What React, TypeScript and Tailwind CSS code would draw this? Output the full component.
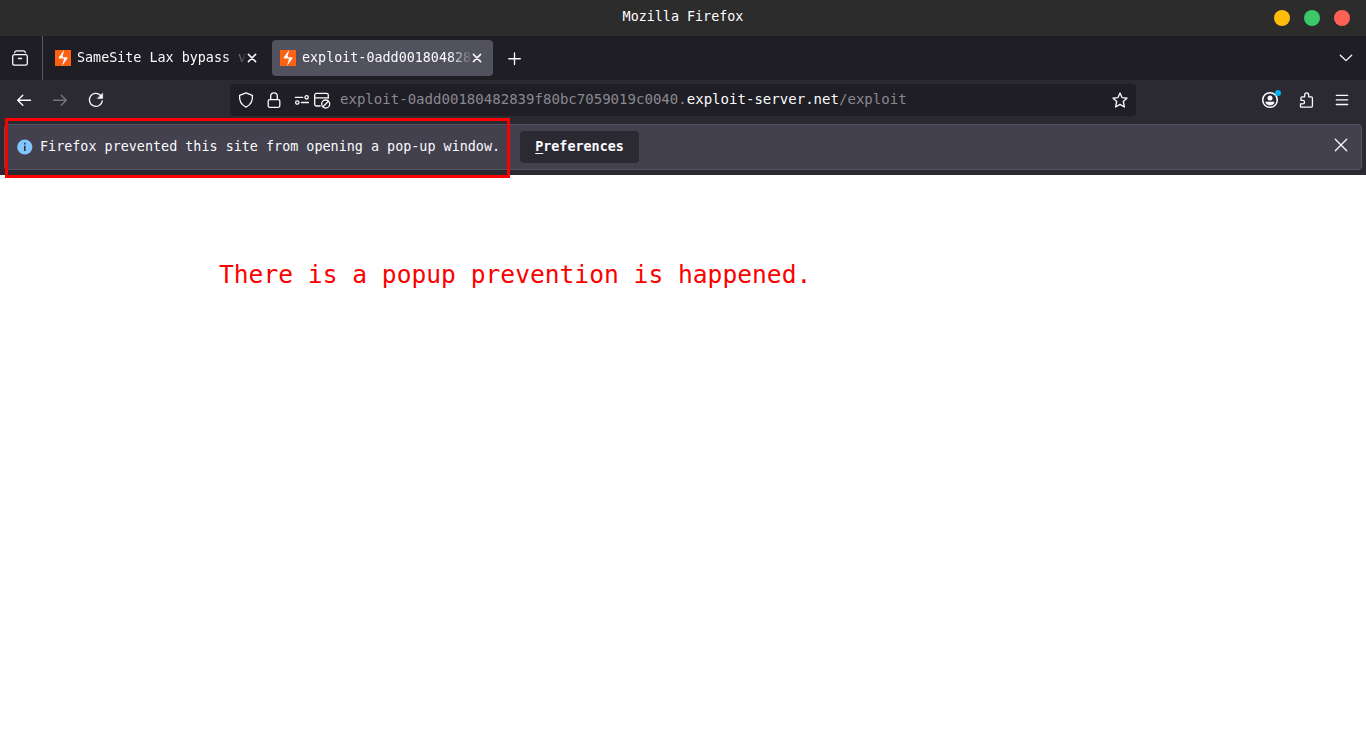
import type { ReactNode } from "react";

type IconProps = { children: ReactNode; className?: string };

function Icon({ children, className = "" }: IconProps) {
  return (
    <svg
      viewBox="0 0 16 16"
      fill="none"
      stroke="currentColor"
      strokeWidth="1.3"
      strokeLinecap="round"
      strokeLinejoin="round"
      className={`size-4 shrink-0 overflow-visible ${className}`}
    >
      {children}
    </svg>
  );
}

function BurpLogo() {
  return (
    <svg viewBox="0 0 16 16" className="size-4 shrink-0">
      <rect width="16" height="16" fill="#ff6113" />
      <path d="M9.2 0 3.8 7.3v1.2h5.2L7 16l5.4-7.4V7.2H7.7z" fill="#fff" />
      <path d="M9.6 1.5v4.6H7.4zM6.5 14.3V9.8h2.2z" fill="#ff6113" />
    </svg>
  );
}

function TabTitle({ children }: { children: ReactNode }) {
  return (
    <div className="ml-1.5 -mr-1 w-[171px] whitespace-nowrap leading-5 [mask-image:linear-gradient(to_right,black_86%,transparent)]">
      {children}
    </div>
  );
}

function TabClose() {
  return (
    <Icon>
      <path d="M4.4 4.4 11.6 11.6M11.6 4.4 4.4 11.6" strokeWidth="1.5" />
    </Icon>
  );
}

function TitleBar() {
  return (
    <header className="flex h-9 bg-[#2c2c2c]">
      <div className="w-[200px]" />
      <h1 className="flex-1 pt-[7px] text-center leading-5 text-white">Mozilla Firefox</h1>
      <div className="flex w-[200px] items-center justify-end gap-3.5 pr-4">
        <span className="size-4 rounded-full bg-[#ffbd0b]" />
        <span className="size-4 rounded-full bg-[#3ac86a]" />
        <span className="size-4 rounded-full bg-[#ff6152]" />
      </div>
    </header>
  );
}

function TabStrip() {
  return (
    <div className="flex h-11 items-center bg-[#1f1e25]">
      <div className="flex h-11 w-[43px] items-center border-r border-[#5a5a60] pl-3">
        <Icon>
          <path d="M2.6 2.6c.3-1.1.9-1.7 2-1.7h6.8c1.1 0 1.7.6 2 1.7" />
          <rect x=".7" y="4.6" width="14.6" height="10.6" rx="1.8" />
          <path d="M6.4 8.5h3.2" />
        </Icon>
      </div>
      <div className="flex w-[221px] items-center pl-3">
        <BurpLogo />
        <TabTitle>SameSite Lax bypass v</TabTitle>
        <TabClose />
      </div>
      <div className="ml-2 flex h-9 w-[221px] items-center rounded bg-[#52525e] pl-2">
        <BurpLogo />
        <TabTitle>exploit-0add001804828</TabTitle>
        <TabClose />
      </div>
      <Icon className="ml-[14px] mt-px">
        <path d="M7.5 2v11.5M1.8 7.75h11.5" />
      </Icon>
      <Icon className="ml-auto mr-3">
        <path d="M2.3 5.2 8 10.6l5.7-5.4" />
      </Icon>
    </div>
  );
}

function UrlBar() {
  return (
    <div className="flex h-8 w-[906px] items-center rounded bg-[#1f1e25] pl-2 pr-2">
      <Icon>
        <path d="M8 .8 14.4 3.4c.5 4.6-1.4 9.2-6.4 11.8C3 12.6 1.1 8 1.6 3.4z" />
      </Icon>
      <Icon className="ml-3">
        <rect x="2.2" y="7.6" width="11.6" height="7.7" rx="1.5" />
        <path d="M4.7 7.4V4.1a3.3 3.3 0 0 1 6.6 0v3.3" />
      </Icon>
      <Icon className="ml-3">
        <path d="M1.3 5.3h7.4M7.4 10.5h7" />
        <circle cx="12.6" cy="5.3" r="1.7" />
        <circle cx="3.3" cy="10.5" r="1.7" />
      </Icon>
      <Icon className="ml-1">
        <path d="M6.2 14H2.4a1.7 1.7 0 0 1-1.7-1.7V3.1a1.7 1.7 0 0 1 1.7-1.7h10.2a1.7 1.7 0 0 1 1.7 1.7v3.2M.9 5.8h13.2" />
        <circle cx="11.7" cy="12" r="4" />
        <path d="m9 14.7 5.4-5.4" />
      </Icon>
      <div className="ml-2.5 flex-1 whitespace-nowrap pb-0.5 text-[14.05px] leading-5 text-[#8a8990]">
        exploit-0add00180482839f80bc7059019c0040.
        <span className="text-[#fbfbfe]">exploit-server.net</span>/exploit
      </div>
      <Icon>
        <path d="m8 1 2 4.6 5.1.5-3.8 3.4 1.1 5.5L8 12.4 3.6 15l1.1-5.5L.9 6.1 6 5.6z" />
      </Icon>
    </div>
  );
}

function Toolbar() {
  return (
    <div className="flex h-10 items-center bg-[#2b2a33]">
      <div className="flex w-[230px] gap-5 pl-4">
        <Icon>
          <path d="M14.5 8.2H1.7M6.8 3.2 1.7 8.2 6.8 13.2" strokeWidth="1.4" />
        </Icon>
        <Icon className="text-[#75747b]">
          <path d="M1.5 8.2h12.8M9.2 3.2 14.3 8.2 9.2 13.2" strokeWidth="1.4" />
        </Icon>
        <Icon>
          <path d="M14.3 8.8A6.5 6.5 0 1 1 12.4 3.2" />
          <path d="M14.7 1.3v5.1H9.6z" fill="currentColor" strokeWidth=".5" />
        </Icon>
      </div>
      <UrlBar />
      <div className="ml-auto flex gap-5 pr-4">
        <Icon>
          <circle cx="8" cy="8" r="7.3" strokeWidth="1.5" />
          <circle cx="8" cy="6" r="2.5" fill="currentColor" stroke="none" />
          <path d="M4 10h8v1.3c-2 2.4-6 2.4-8 0z" fill="currentColor" strokeWidth=".6" />
          <circle cx="16" cy="1" r="3" fill="#00b3f4" stroke="none" />
        </Icon>
        <Icon>
          <path d="M3 15.2h10.1a1.3 1.3 0 0 0 1.3-1.3V5.8a1 1 0 0 0-1-1h-2.7V2.9a2 2 0 0 0-4 0v1.9H4a1 1 0 0 0-1 1v2.6h1.8a1.7 1.7 0 0 1 0 3.5H2.5v2.8z" />
        </Icon>
        <Icon>
          <path d="M2.3 3.3h11.4M2.3 7.9h11.4M2.3 12.5h11.4" />
        </Icon>
      </div>
    </div>
  );
}

function Notification() {
  return (
    <div className="relative h-[55px] bg-[#2b2a33] px-1 pt-1">
      <div className="flex h-[46px] items-center rounded border border-[#54535f] bg-[#42414d] pl-3 pr-3">
        <svg viewBox="0 0 16 16" className="size-4 shrink-0">
          <circle cx="7.8" cy="8" r="7.6" fill="#80c6ff" />
          <path d="M7 3.8h1.6v1.6H7zM7 6.8h1.6v5.1H7z" fill="#35343f" />
        </svg>
        <p className="ml-[7px] w-[480px] whitespace-nowrap text-[13.41px] leading-5">
          Firefox prevented this site from opening a pop-up window.
        </p>
        <button className="h-8 w-[119px] rounded bg-[#2b2a33] pb-px text-center font-bold leading-5">
          <span className="underline underline-offset-[2px]">P</span>references
        </button>
        <Icon className="ml-auto mb-1">
          <path d="M2.3 2.3 13.7 13.7M13.7 2.3 2.3 13.7" />
        </Icon>
      </div>
      <div className="pointer-events-none absolute left-[5px] -top-0.5 h-[60px] w-[505px] border-3 border-[#fb0000]" />
    </div>
  );
}

export default function App() {
  return (
    <div className="h-[738px] overflow-hidden bg-white font-['DejaVu_Sans_Mono',monospace] text-[13.38px] text-[#fbfbfe]">
      <TitleBar />
      <TabStrip />
      <Toolbar />
      <Notification />
      <main className="pl-[219px] pt-[82px]">
        <p className="whitespace-nowrap text-[24.6px] leading-9 text-[#fb0000]">
          There is a popup prevention is happened.
        </p>
      </main>
    </div>
  );
}
